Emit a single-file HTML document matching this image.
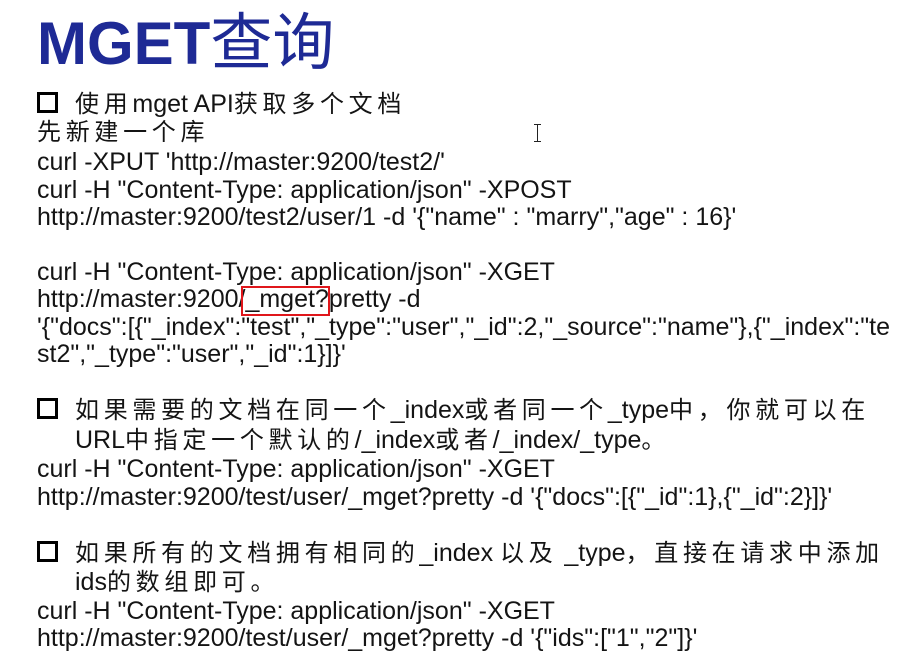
<!DOCTYPE html>
<html><head><meta charset="utf-8"><style>
body{margin:0;width:914px;height:667px;background:#fff;position:relative;overflow:hidden;font-family:"Liberation Sans","Noto Sans CJK SC",sans-serif;color:#141414}
.l{position:absolute;left:37px;font-size:25px;line-height:27px;white-space:nowrap;margin-top:2px}
.i{left:75px}
.cn{font-size:24px;letter-spacing:4.7px}
.cn i{font-style:normal;font-size:25px;letter-spacing:0}
.t{position:absolute;left:37px;top:7px;font-size:60px;line-height:60px;font-weight:bold;color:#1e2a95;white-space:nowrap}
.t span{font-weight:normal;font-family:"Noto Sans CJK SC",sans-serif;font-size:62px}
.b{display:inline-block;width:15px;height:15px;border:3px solid #000;margin-right:17px;vertical-align:-1px}
.box{position:absolute;left:241px;top:286px;width:85px;height:26px;border:2px solid #e0161b}
.cur{position:absolute;left:537px;top:124px;width:1px;height:18px;background:#222}
.cur:before,.cur:after{content:"";position:absolute;left:-3px;width:7px;height:1px;background:#222}
.cur:before{top:0}.cur:after{bottom:0}
</style></head><body>
<div class="t">MGET<span>查询</span></div>
<div class="l cn" style="top:89px"><span class="b"></span>使用<i>mget API</i>获取多个文档</div>
<div class="l cn" style="top:117px">先新建一个库</div>
<div class="cur"></div>
<div class="l" style="top:147px">curl -XPUT 'http://master:9200/test2/'</div>
<div class="l" style="top:175px">curl -H "Content-Type: application/json" -XPOST</div>
<div class="l" style="top:202px">http://master:9200/test2/user/1 -d '{"name" : "marry","age" : 16}'</div>
<div class="l" style="top:257px">curl -H "Content-Type: application/json" -XGET</div>
<div class="l" style="top:284px">http://master:9200/_mget?pretty -d</div>
<div class="box"></div>
<div class="l" style="top:312px">'{"docs":[{"_index":"test","_type":"user","_id":2,"_source":"name"},{"_index":"te</div>
<div class="l" style="top:339px">st2","_type":"user","_id":1}]}'</div>
<div class="l cn" style="top:395px"><span class="b"></span>如果需要的文档在同一个<i>_index</i>或者同一个<i>_type</i>中，你就可以在</div>
<div class="l i cn" style="top:425px"><i>URL</i>中指定一个默认的<i>/_index</i>或者<i>/_index/_type</i>。</div>
<div class="l" style="top:454px">curl -H "Content-Type: application/json" -XGET</div>
<div class="l" style="top:482px">http://master:9200/test/user/_mget?pretty -d '{"docs":[{"_id":1},{"_id":2}]}'</div>
<div class="l cn" style="top:538px"><span class="b"></span>如果所有的文档拥有相同的<i>_index </i>以及<i> _type</i>，直接在请求中添加</div>
<div class="l i cn" style="top:567px"><i>ids</i>的数组即可。</div>
<div class="l" style="top:596px">curl -H "Content-Type: application/json" -XGET</div>
<div class="l" style="top:623px">http://master:9200/test/user/_mget?pretty -d '{"ids":["1","2"]}'</div>
</body></html>
